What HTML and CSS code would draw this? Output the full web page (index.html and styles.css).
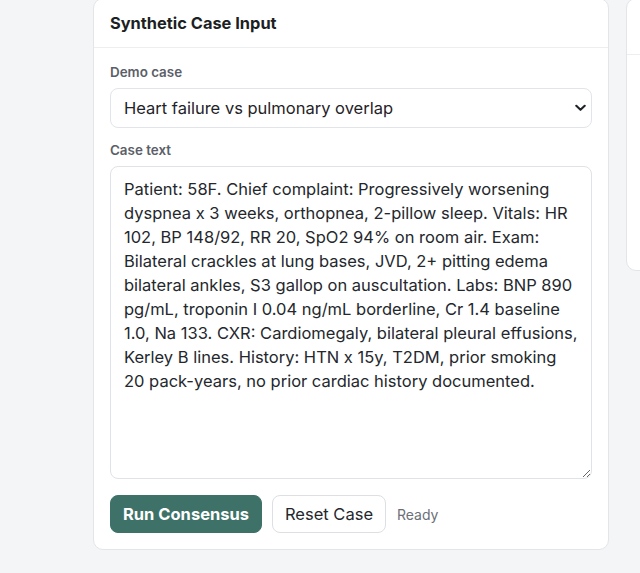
FILE: index.html
```html
<!DOCTYPE html>
<html lang="en">
<head>
<meta charset="utf-8">
<title>Synthetic Case Input</title>
<link rel="stylesheet" href="styles.css">
</head>
<body>
<div class="layout">
  <section class="card">
    <header class="card-header">
      <h2 class="card-title">Synthetic Case Input</h2>
    </header>
    <div class="card-body">
      <label class="field-label" for="demo">Demo case</label>
      <div class="select-wrap">
        <select id="demo" class="select">
          <option>Heart failure vs pulmonary overlap</option>
        </select>
        <svg class="chevron" width="11" height="8" viewBox="0 0 11 8" aria-hidden="true"><path d="M1.3 1.8 L5.5 5.8 L9.7 1.8" fill="none" stroke="#1f2328" stroke-width="2.1" stroke-linecap="round" stroke-linejoin="round"/></svg>
      </div>
      <label class="field-label field-label-gap" for="case">Case text</label>
      <textarea id="case" class="textarea">Patient: 58F. Chief complaint: Progressively worsening dyspnea x 3 weeks, orthopnea, 2-pillow sleep. Vitals: HR 102, BP 148/92, RR 20, SpO2 94% on room air. Exam: Bilateral crackles at lung bases, JVD, 2+ pitting edema bilateral ankles, S3 gallop on auscultation. Labs: BNP 890 pg/mL, troponin I 0.04 ng/mL borderline, Cr 1.4 baseline 1.0, Na 133. CXR: Cardiomegaly, bilateral pleural effusions, Kerley B lines. History: HTN x 15y, T2DM, prior smoking 20 pack-years, no prior cardiac history documented.</textarea>
      <div class="actions">
        <button class="btn btn-primary" type="button">Run Consensus</button>
        <button class="btn btn-secondary" type="button">Reset Case</button>
        <span class="status">Ready</span>
      </div>
    </div>
  </section>
  <section class="card card-side">
    <header class="card-header side-header"></header>
    <div class="side-body"></div>
  </section>
</div>
</body>
</html>
```

FILE: styles.css
```css
html, body {
  margin: 0;
  padding: 0;
  overflow: hidden;
  background: #f4f5f7;
  font-family: Inter, "Noto Sans", "Liberation Sans", sans-serif;
  color: #1f2328;
}

.layout {
  display: grid;
  grid-template-columns: 516px 420px;
  column-gap: 17px;
  align-items: start;
  padding-left: 93px;
  margin-top: -2px;
}

.card {
  background: #ffffff;
  border: 1px solid #e3e5e9;
  border-radius: 10px;
  box-sizing: border-box;
}

.card-header {
  padding: 14px 16px;
  border-bottom: 1px solid #eceef1;
}

.card-title {
  margin: 0;
  font-size: 16.4px;
  line-height: 20px;
  font-weight: 700;
  color: #1c1f23;
}

.card-body {
  padding: 16px;
  display: flex;
  flex-direction: column;
}

.field-label {
  font-size: 13.4px;
  line-height: 16px;
  font-weight: 600;
  color: #5b6068;
  margin-bottom: 8px;
}

.field-label-gap {
  margin-top: 14px;
}

.select-wrap {
  position: relative;
}

.select {
  appearance: none;
  -webkit-appearance: none;
  width: 100%;
  height: 40px;
  box-sizing: border-box;
  border: 1px solid #e1e4e8;
  border-radius: 8px;
  background: #ffffff;
  padding: 0 36px 0 13px;
  font-family: inherit;
  font-size: 16.5px;
  color: #1f2328;
}

.chevron {
  position: absolute;
  right: 6px;
  top: 16px;
  pointer-events: none;
}

.textarea {
  display: block;
  width: 100%;
  height: 313px;
  box-sizing: border-box;
  border: 1px solid #dfe2e6;
  border-radius: 8px;
  padding: 10px 13px;
  font-family: inherit;
  font-size: 16.5px;
  line-height: 24px;
  color: #24282d;
  background: #ffffff;
  resize: vertical;
}

.actions {
  display: flex;
  align-items: center;
  gap: 10px;
  margin-top: 16px;
}

.btn {
  height: 38px;
  box-sizing: border-box;
  border-radius: 8px;
  padding: 0 12px;
  font-family: inherit;
  font-size: 16.5px;
}

.btn-primary {
  background: #3e7269;
  border: 1px solid #3e7269;
  color: #ffffff;
  font-weight: 700;
}

.btn-secondary {
  background: #ffffff;
  border: 1px solid #dcdfe3;
  color: #24282d;
  font-weight: 400;
}

.status {
  margin-left: 1px;
  font-size: 14px;
  color: #6b7078;
}

.side-header {
  height: 56px;
  box-sizing: border-box;
}

.side-body {
  height: 215px;
}
```
